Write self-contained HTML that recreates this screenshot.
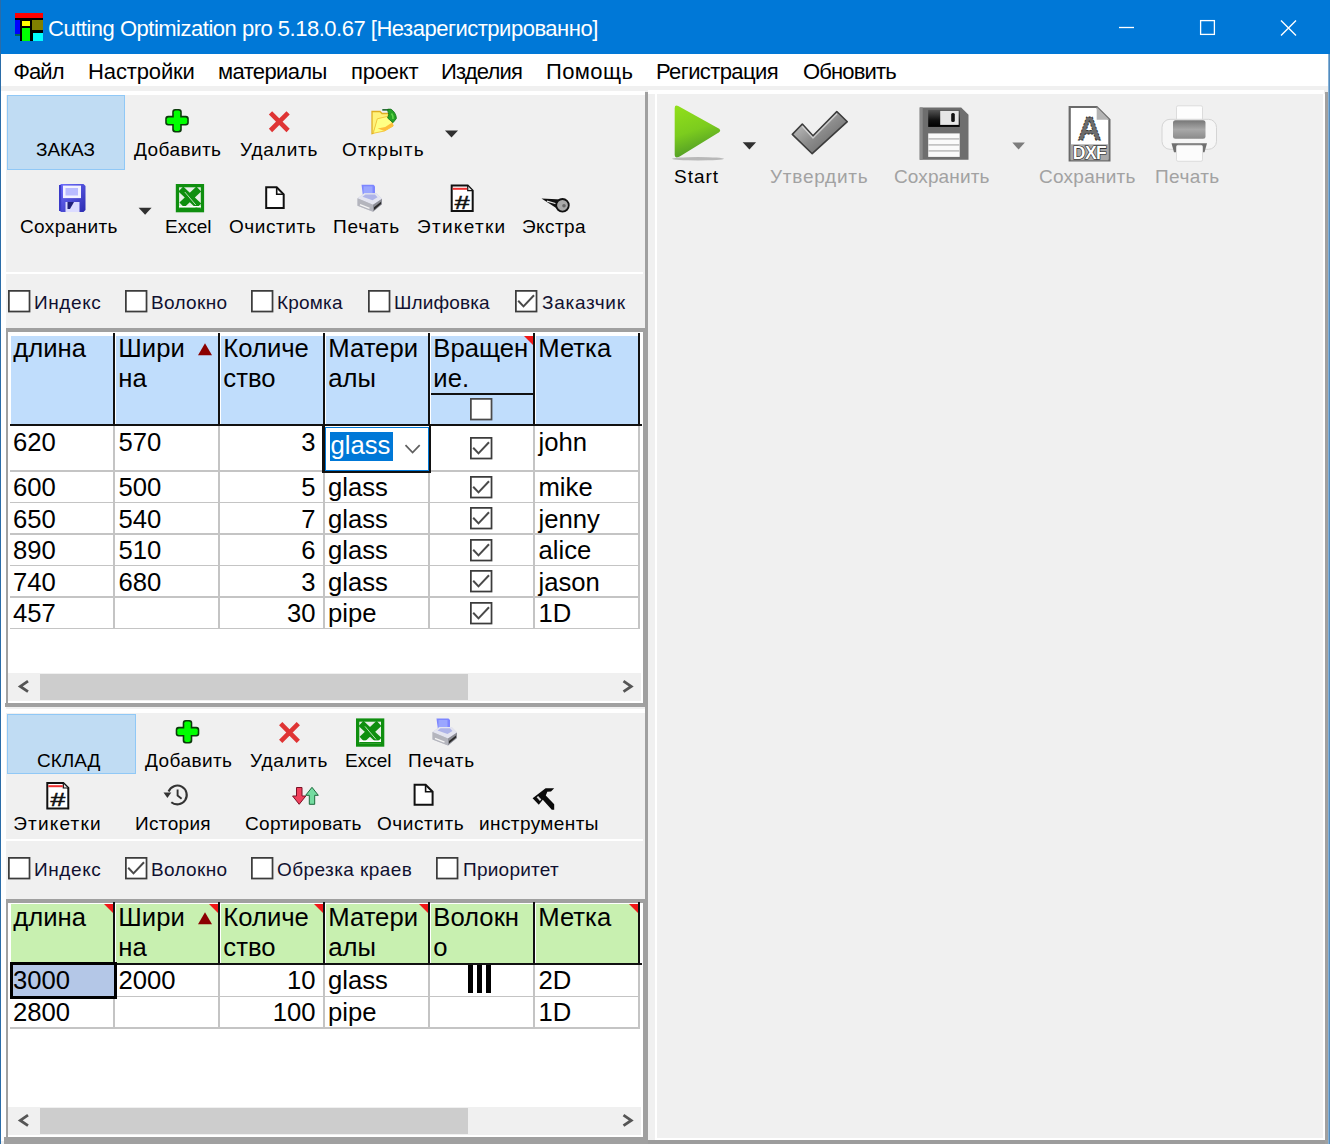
<!DOCTYPE html>
<html lang="ru"><head><meta charset="utf-8"><title>Cutting Optimization pro</title>
<style>
html,body{margin:0;padding:0}
body{width:1330px;height:1144px;position:relative;overflow:hidden;background:#f0f0f0;font-family:"Liberation Sans",sans-serif}
.a{position:absolute}
.t{position:absolute;white-space:pre;line-height:1;font-family:"Liberation Sans",sans-serif}
.g{position:absolute;white-space:pre;line-height:1;font-family:"Liberation Sans",sans-serif;font-size:25.67px;color:#000}
.cb{position:absolute;width:18.9px;height:18.9px;border:1.75px solid #3c3c3c;background:#fff}
svg{position:absolute;overflow:visible}
</style></head><body>

<div class="a" style="left:0px;top:0px;width:1330px;height:54.4px;background:#0078d7;"></div>
<div class="a" style="left:0px;top:54px;width:1330px;height:32px;background:#fff;"></div>
<div class="a" style="left:1px;top:90.5px;width:644px;height:4.5px;background:#fff;"></div>
<div class="a" style="left:1px;top:90.5px;width:5px;height:1050px;background:#fff;"></div>
<div class="a" style="left:648px;top:90px;width:676px;height:4px;background:#fff;"></div>
<div class="a" style="left:655px;top:90px;width:2px;height:1048px;background:#fff;"></div>
<div class="a" style="left:645px;top:92px;width:3.4px;height:1048px;background:#a0a0a0;"></div>
<div class="a" style="left:4.5px;top:703.3px;width:643px;height:3.4px;background:#a0a0a0;"></div>
<div class="a" style="left:1px;top:709px;width:644px;height:4px;background:#fff;"></div>
<div class="a" style="left:4px;top:1137px;width:644px;height:7px;background:#a0a0a0;"></div>
<div class="a" style="left:648px;top:1140px;width:680px;height:4px;background:#9c9c9c;"></div>
<div class="a" style="left:655px;top:1138.3px;width:670px;height:1.7px;background:#fff;"></div>
<div class="a" style="left:1323.3px;top:94px;width:2px;height:1044px;background:#fff;"></div>
<div class="a" style="left:1325.3px;top:92px;width:2.3px;height:1052px;background:#a0a0a0;"></div>
<div class="a" style="left:0px;top:0px;width:1.2px;height:1144px;background:#2a6ca8;"></div>
<div class="a" style="left:1327.6px;top:54px;width:2.4px;height:1090px;background:linear-gradient(90deg,#9cc4e4,#3c78b0);"></div>
<div class="a" style="left:6px;top:272px;width:637px;height:2px;background:#fff;"></div>
<div class="a" style="left:6px;top:839px;width:637px;height:2.4px;background:#fff;"></div>
<svg style="left:15px;top:13px" width="28" height="28" viewBox="0 0 28 28">
<rect x="0" y="0" width="28" height="28" fill="#000"/>
<rect x="0" y="0" width="28" height="5" fill="#f00"/>
<rect x="0" y="7" width="5" height="14" fill="#00f"/>
<rect x="0" y="22" width="5" height="6" fill="#0078d7"/>
<rect x="0" y="21" width="5" height="2" fill="#065"/>
<rect x="7" y="8" width="8" height="5" fill="#ff0"/>
<rect x="7" y="15" width="8" height="13" fill="#0f0"/>
<rect x="17" y="7" width="11" height="10" fill="#808000"/>
<rect x="18" y="20" width="10" height="8" fill="#0ff"/>
</svg>
<svg style="left:1110px;top:10px" width="200" height="36" viewBox="0 0 200 36">
<path d="M9 17.5H24" stroke="#fff" stroke-width="1.3" fill="none"/>
<rect x="90.6" y="10.6" width="13.8" height="13.8" stroke="#fff" stroke-width="1.3" fill="none"/>
<path d="M171 10.5L186 25.5M186 10.5L171 25.5" stroke="#fff" stroke-width="1.4" fill="none"/>
</svg>
<div class="a" style="left:6.5px;top:95.3px;width:116.8px;height:72.7px;background:#c0dcf3;border:1px solid #90c8f6"></div>
<div class="a" style="left:6.5px;top:713.5px;width:127.3px;height:58.5px;background:#c0dcf3;border:1px solid #90c8f6"></div>
<svg style="left:0;top:0" width="1330" height="1144" viewBox="0 0 1330 1144">
<defs>
<linearGradient id="gPlay" x1="0" y1="0" x2="0.3" y2="1"><stop offset="0" stop-color="#92e01a"/><stop offset="0.55" stop-color="#7ccc1e"/><stop offset="1" stop-color="#4f9a26"/></linearGradient>
<linearGradient id="gChk" x1="0" y1="0" x2="1" y2="1"><stop offset="0" stop-color="#d8d8d8"/><stop offset="0.5" stop-color="#8c8c8c"/><stop offset="1" stop-color="#5a5a5a"/></linearGradient>
<linearGradient id="gFl" x1="0" y1="0" x2="1" y2="1"><stop offset="0" stop-color="#7070ff"/><stop offset="1" stop-color="#2c2cb0"/></linearGradient>
<linearGradient id="gBlk" x1="0" y1="0" x2="0" y2="1"><stop offset="0" stop-color="#555"/><stop offset="0.6" stop-color="#111"/><stop offset="1" stop-color="#000"/></linearGradient>
<linearGradient id="gPr" x1="0" y1="0" x2="0" y2="1"><stop offset="0" stop-color="#777"/><stop offset="0.5" stop-color="#a8a8a8"/><stop offset="1" stop-color="#8a8a8a"/></linearGradient>
</defs>
<g transform="translate(177 120.7)"><rect x="-11.8" y="-4.9" width="23.6" height="9.8" rx="3" fill="#0b3b0b"/><rect x="-4.8" y="-11.8" width="9.6" height="23.6" rx="3" fill="#0b3b0b"/><rect x="-10.2" y="-3.3" width="20.4" height="6.6" rx="1.8" fill="#0f0"/><rect x="-3.2" y="-10.2" width="6.4" height="20.4" rx="1.8" fill="#0f0"/></g>
<g transform="translate(279.3 121.7)"><path d="M-8.8 -8.8L8.8 8.8M8.8 -8.8L-8.8 8.8" stroke="#df3434" stroke-width="4.6" fill="none"/></g>
<path d="M372 111.500h8l2 2h6.500v5l-10.500 1.500-4.500 13.300-1.500 0.300z" fill="#fff27a" stroke="#dfae22" stroke-width="1.300"/><path d="M377.300 118.800l12.700-3 3.200 10.200-8.700 5-11.300 2.300z" fill="#ffff84" stroke="#f2c840" stroke-width="1"/><path d="M384.500 131l8.700-5-1-3.500-7 4.500-7.500 1.500z" fill="#ffbe3c"/><path d="M382.300 109h8v1.700h-8z" fill="#2c6e3a"/><path d="M387.800 109.200L391 109.200Q396 112.500 396.400 118.500L393 122.700L387.600 118Q389.800 114.500 387.800 111Z" fill="#25a325" stroke="#0d6d12" stroke-width="0.800"/><path d="M391.500 113.500q2 2.500 1.500 5.500" stroke="#5fd64a" stroke-width="1.500" fill="none"/>
<path d="M445 130.4h13l-6.5 7z" fill="#303030"/>
<g transform="translate(59 184)"><path d="M2 0h22.500l2 2v24l-2 2h-22.500l-2-2v-24z" fill="url(#gFl)"/><rect x="4" y="1.600" width="18" height="12.500" fill="#f2f2ff"/><rect x="6.500" y="4" width="12.500" height="7.500" fill="#b9bcff"/><rect x="6.500" y="18" width="14" height="10" fill="#dcdcff"/><path d="M8.500 18h6.500l-4 7h-2.500z" fill="#20207a"/><rect x="0" y="1" width="2.200" height="26" fill="#3a3ac8"/></g>
<path d="M138.6 207.8h13l-6.5 7z" fill="#303030"/>
<rect x="175.8" y="184" width="28.3" height="28.3" fill="#0f8f0f"/><rect x="179.10000000000002" y="187.3" width="21.700000000000003" height="21.700000000000003" fill="#e8efe8"/><path d="M180.8 189L198.8 206M198.8 189L181.8 205" stroke="#0f8f0f" stroke-width="7" fill="none"/><path d="M184.8 192L195.8 205" stroke="#c8e8c8" stroke-width="0.9"/><rect x="179.10000000000002" y="206" width="21.700000000000003" height="1.6" fill="#fff"/><rect x="179.10000000000002" y="207.6" width="21.700000000000003" height="1.6" fill="#0f8f0f"/>
<path d="M266.2 187.3h10.5l7 7v13.8h-17.5z" fill="#fff" stroke="#111" stroke-width="2" stroke-linejoin="miter"/><path d="M276.7 187.3v7h7" fill="none" stroke="#111" stroke-width="1.6"/>
<g transform="translate(355.5 184.3)"><path d="M6 0.5h12l1.5 1.5v10h-12z" fill="#7d86ff"/><path d="M8 2h9v9h-9z" fill="#9aa6ff"/><path d="M2 14l7-5h12l5.5 5.5v5.5l-9 7.5-15.5-6z" fill="#c9cad6"/><path d="M2 14l7-5h12l5.5 5.5-9 6z" fill="#e4e5f0"/><path d="M7 12.5l3-2.2h9.5l2.5 2.6-5 3.1z" fill="#aeb4e8"/><path d="M2 14l15.500 6.500v7l-15.500-6z" fill="#b4b5bd"/><path d="M17.5 20.500l9-6v5.500l-9 7.500z" fill="#8d8e96"/><path d="M18.5 23l7-5.500v2.300l-7 5.800z" fill="#2a2a2a"/><path d="M4.500 20.300l9.500 3.800" stroke="#f4f4f4" stroke-width="1.400"/></g>
<path d="M451.7 185.6h16l5 5v20.5h-21z" fill="#fff" stroke="#111" stroke-width="2"/><path d="M467.7 186.1v4.5h4.5" fill="#e4e4e4" stroke="#111" stroke-width="1.2"/><rect x="452.7" y="187.79999999999998" width="14.5" height="2" fill="#f03030"/><text transform="translate(462.2 208.6) scale(1.4 1)" x="0" y="0" font-family="Liberation Sans, sans-serif" font-size="19" text-anchor="middle" fill="#111" stroke="#111" stroke-width="0.5">#</text>
<g transform="translate(541.500 198)"><path d="M0 0.400l20 1-3 10z" fill="#111"/><path d="M5.500 3.200l10 2.800" stroke="#e8e8e8" stroke-width="1.200"/><circle cx="21" cy="7.300" r="6.300" fill="#a9a9a9" stroke="#111" stroke-width="1.800"/><circle cx="22.500" cy="7.800" r="1.800" fill="#666"/></g>
<g transform="translate(187.5 731.7)"><rect x="-11.8" y="-4.9" width="23.6" height="9.8" rx="3" fill="#0b3b0b"/><rect x="-4.8" y="-11.8" width="9.6" height="23.6" rx="3" fill="#0b3b0b"/><rect x="-10.2" y="-3.3" width="20.4" height="6.6" rx="1.8" fill="#0f0"/><rect x="-3.2" y="-10.2" width="6.4" height="20.4" rx="1.8" fill="#0f0"/></g>
<g transform="translate(289.5 732.5)"><path d="M-8.8 -8.8L8.8 8.8M8.8 -8.8L-8.8 8.8" stroke="#df3434" stroke-width="4.6" fill="none"/></g>
<rect x="356" y="718.4" width="28.3" height="28.3" fill="#0f8f0f"/><rect x="359.3" y="721.6999999999999" width="21.700000000000003" height="21.700000000000003" fill="#e8efe8"/><path d="M361 723.4L379 740.4M379 723.4L362 739.4" stroke="#0f8f0f" stroke-width="7" fill="none"/><path d="M365 726.4L376 739.4" stroke="#c8e8c8" stroke-width="0.9"/><rect x="359.3" y="740.4" width="21.700000000000003" height="1.6" fill="#fff"/><rect x="359.3" y="742.0" width="21.700000000000003" height="1.6" fill="#0f8f0f"/>
<g transform="translate(430.5 718)"><path d="M6 0.5h12l1.5 1.5v10h-12z" fill="#7d86ff"/><path d="M8 2h9v9h-9z" fill="#9aa6ff"/><path d="M2 14l7-5h12l5.5 5.5v5.5l-9 7.5-15.5-6z" fill="#c9cad6"/><path d="M2 14l7-5h12l5.5 5.5-9 6z" fill="#e4e5f0"/><path d="M7 12.5l3-2.2h9.5l2.5 2.6-5 3.1z" fill="#aeb4e8"/><path d="M2 14l15.500 6.500v7l-15.500-6z" fill="#b4b5bd"/><path d="M17.5 20.500l9-6v5.500l-9 7.500z" fill="#8d8e96"/><path d="M18.5 23l7-5.500v2.300l-7 5.800z" fill="#2a2a2a"/><path d="M4.500 20.300l9.500 3.800" stroke="#f4f4f4" stroke-width="1.400"/></g>
<path d="M47.3 783h16l5 5v20.5h-21z" fill="#fff" stroke="#111" stroke-width="2"/><path d="M63.3 783.5v4.5h4.5" fill="#e4e4e4" stroke="#111" stroke-width="1.2"/><rect x="48.3" y="785.2" width="14.5" height="2" fill="#f03030"/><text transform="translate(57.8 806) scale(1.4 1)" x="0" y="0" font-family="Liberation Sans, sans-serif" font-size="19" text-anchor="middle" fill="#111" stroke="#111" stroke-width="0.5">#</text>
<g transform="translate(177.300 795)" fill="none" stroke="#333" stroke-width="2.100"><path d="M-8.700 -3.500A9.400 9.400 0 1 1 -6 7.200"/><path d="M0.300 -5.500v6l4 3.200" stroke-width="1.900"/><path d="M-13.800 -2.500h7.800l-3.900 5.500z" fill="#333" stroke="none"/></g>
<path d="M296.500 787.500h5.500v8.500h3.800l-6.600 8.300-6.600-8.300h3.900z" fill="#f0405c" stroke="#7a1024" stroke-width="1"/><path d="M309.300 804.300v-9h-3.600l6.300-8 6.300 8h-3.600v9z" fill="#74dca0" stroke="#1c6a3c" stroke-width="1"/>
<path d="M414.6 784.7h11l7 7v13h-18z" fill="#fff" stroke="#111" stroke-width="2" stroke-linejoin="miter"/><path d="M425.6 784.7v7h7" fill="none" stroke="#111" stroke-width="1.6"/>
<path d="M532.600 798.200L545.600 788.300L554.200 788.300L551 791.600L547.300 791.800L545.800 795.600L554.200 804.300L554.200 809.800L551.800 809.800L542.800 799.800L538.800 804.800Z" fill="#0a0a0a"/><path d="M536.600 797.200l1.500-1.200 3.300 3.600-1.500 1.300z" fill="#d8d8d8"/>
<path d="M674.700 108q0-3.500 3.500-2l40.500 22.500q3 2 0 4l-39 24q-5 2.500-5-1.500z" fill="url(#gPlay)"/><ellipse cx="698" cy="158.800" rx="26" ry="1.700" fill="#b8b8b8"/>
<path d="M742.7 142.2h13.4l-6.7 7.4z" fill="#303030"/>
<path d="M792.300 134.400L802.300 124L813 135.800L836.800 111.500L847.300 121.700L812.200 153.700Z" fill="url(#gChk)" stroke="#3c3c3c" stroke-width="1.600" stroke-linejoin="round"/><path d="M802.300 126.300l10.700 11.700 24-24.300" stroke="#e4e4e4" stroke-width="1.300" fill="none" opacity="0.700"/>
<g transform="translate(919.700 107.400)"><path d="M0 0h41.500l7.300 7.300v45.100h-48.800z" fill="#6e6e6e"/><path d="M0 0h3v52.400h-3z" fill="#8a8a8a"/><rect x="8.500" y="2.500" width="31.500" height="17" fill="url(#gBlk)"/><rect x="20.500" y="3.500" width="18.500" height="14" fill="#e6e6e6"/><rect x="31.500" y="5.500" width="3.600" height="9" rx="1.500" fill="#111"/><rect x="8.500" y="26" width="31.500" height="23.500" fill="#fafafa"/><path d="M8.500 31.500h31.500M8.500 37.500h31.500M8.500 43.500h31.500" stroke="#c4c4c4" stroke-width="1.600"/></g>
<path d="M1012.3 142.6h12.6l-6.3 7z" fill="#7c7c7c"/>
<g transform="translate(1068.500 105.800)"><path d="M1.200 1.200h27l12.700 12.700v40.800h-39.700z" fill="#fff" stroke="#6a6a6a" stroke-width="2.200"/><path d="M28.200 1.200v12.700h12.700z" fill="#b4b4b4"/><rect x="2.300" y="38.500" width="37.500" height="16" fill="#a8a8a8"/><text x="21" y="34" font-family="Liberation Sans, sans-serif" font-weight="bold" font-size="33" text-anchor="middle" fill="#6c6c6c" stroke="#222" stroke-width="0.800" stroke-dasharray="2 1.500">A</text><text x="21" y="52.800" font-family="Liberation Sans, sans-serif" font-weight="bold" font-size="17.500" text-anchor="middle" fill="#fff" stroke="#111" stroke-width="1.100" paint-order="stroke" letter-spacing="-0.500">DXF</text></g>
<g transform="translate(1161.500 105.800)"><rect x="15" y="0" width="26" height="17" rx="1.500" fill="#fdfdfd" stroke="#dcdcdc" stroke-width="1"/><rect x="0.500" y="13.500" width="54.500" height="30" rx="8" fill="#f6f6f6" stroke="#d4d4d4" stroke-width="1"/><rect x="11.500" y="14.500" width="32.500" height="18.500" rx="2.500" fill="url(#gPr)"/><path d="M10 37.500h35.500l-2.500 9h-30.500z" fill="#707070"/><rect x="15" y="39.500" width="26" height="16" rx="1.500" fill="#fcfcfc" stroke="#dcdcdc" stroke-width="1"/></g>
</svg>
<svg style="left:8.3px;top:289.8px" width="23" height="23" viewBox="0 0 23 23"><rect x="0.875" y="0.875" width="20.65" height="20.65" fill="#fff" stroke="#3c3c3c" stroke-width="1.75"/></svg>
<svg style="left:125.3px;top:289.8px" width="23" height="23" viewBox="0 0 23 23"><rect x="0.875" y="0.875" width="20.65" height="20.65" fill="#fff" stroke="#3c3c3c" stroke-width="1.75"/></svg>
<svg style="left:251.3px;top:289.8px" width="23" height="23" viewBox="0 0 23 23"><rect x="0.875" y="0.875" width="20.65" height="20.65" fill="#fff" stroke="#3c3c3c" stroke-width="1.75"/></svg>
<svg style="left:368.3px;top:289.8px" width="23" height="23" viewBox="0 0 23 23"><rect x="0.875" y="0.875" width="20.65" height="20.65" fill="#fff" stroke="#3c3c3c" stroke-width="1.75"/></svg>
<svg style="left:515.3px;top:289.8px" width="23" height="23" viewBox="0 0 23 23"><rect x="0.875" y="0.875" width="20.65" height="20.65" fill="#fff" stroke="#3c3c3c" stroke-width="1.75"/><path d="M3.2 10.8L8.5 16.4L19 5.2" stroke="#4a4a4a" stroke-width="2" fill="none"/></svg>
<svg style="left:8.3px;top:857.3px" width="23" height="23" viewBox="0 0 23 23"><rect x="0.875" y="0.875" width="20.65" height="20.65" fill="#fff" stroke="#3c3c3c" stroke-width="1.75"/></svg>
<svg style="left:125.3px;top:857.3px" width="23" height="23" viewBox="0 0 23 23"><rect x="0.875" y="0.875" width="20.65" height="20.65" fill="#fff" stroke="#3c3c3c" stroke-width="1.75"/><path d="M3.2 10.8L8.5 16.4L19 5.2" stroke="#4a4a4a" stroke-width="2" fill="none"/></svg>
<svg style="left:251.3px;top:857.3px" width="23" height="23" viewBox="0 0 23 23"><rect x="0.875" y="0.875" width="20.65" height="20.65" fill="#fff" stroke="#3c3c3c" stroke-width="1.75"/></svg>
<svg style="left:436.3px;top:857.3px" width="23" height="23" viewBox="0 0 23 23"><rect x="0.875" y="0.875" width="20.65" height="20.65" fill="#fff" stroke="#3c3c3c" stroke-width="1.75"/></svg>
<div class="a" style="left:6px;top:328px;width:639px;height:375px;background:#a0a0a0;"></div>
<div class="a" style="left:8.2px;top:331.5px;width:634.8px;height:371.5px;background:#fff;"></div>
<div class="a" style="left:11px;top:335.5px;width:102.5px;height:88.8px;background:#c0ddfc;"></div>
<div class="a" style="left:113px;top:333.0px;width:2.2px;height:93.0px;background:#111;"></div>
<div class="a" style="left:116px;top:335.5px;width:102.5px;height:88.8px;background:#c0ddfc;"></div>
<div class="a" style="left:218px;top:333.0px;width:2.2px;height:93.0px;background:#111;"></div>
<div class="a" style="left:221px;top:335.5px;width:102.5px;height:88.8px;background:#c0ddfc;"></div>
<div class="a" style="left:323px;top:333.0px;width:2.2px;height:93.0px;background:#111;"></div>
<div class="a" style="left:326px;top:335.5px;width:102.5px;height:88.8px;background:#c0ddfc;"></div>
<div class="a" style="left:428px;top:333.0px;width:2.2px;height:93.0px;background:#111;"></div>
<div class="a" style="left:431px;top:335.5px;width:102.5px;height:88.8px;background:#c0ddfc;"></div>
<div class="a" style="left:533px;top:333.0px;width:2.2px;height:93.0px;background:#111;"></div>
<div class="a" style="left:536px;top:335.5px;width:102.5px;height:88.8px;background:#c0ddfc;"></div>
<div class="a" style="left:638px;top:333.0px;width:2.2px;height:93.0px;background:#111;"></div>
<div class="a" style="left:10px;top:423.9px;width:632px;height:2.2px;background:#111;"></div>
<span class="g" style="left:13.3px;top:336.4px">длина</span>
<span class="g" style="left:118.3px;top:336.4px">Шири</span>
<span class="g" style="left:118.3px;top:366.4px">на</span>
<span class="g" style="left:223.3px;top:336.4px">Количе</span>
<span class="g" style="left:223.3px;top:366.4px">ство</span>
<span class="g" style="left:328.3px;top:336.4px">Матери</span>
<span class="g" style="left:328.3px;top:366.4px">алы</span>
<span class="g" style="left:433.3px;top:336.4px">Вращен</span>
<span class="g" style="left:433.3px;top:366.4px">ие.</span>
<span class="g" style="left:538.3px;top:336.4px">Метка</span>
<svg style="left:197px;top:342.5px" width="16" height="14" viewBox="0 0 16 14"><path d="M8 0.3L15 12.3H1Z" fill="#8b0000"/></svg>
<svg style="left:524px;top:335.5px" width="9" height="9" viewBox="0 0 9 9"><path d="M0 0H9V9Z" fill="#f01818"/></svg>
<div class="a" style="left:10px;top:470.0px;width:630px;height:1.6px;background:#c4c4c4;"></div>
<div class="a" style="left:10px;top:501.5px;width:630px;height:1.6px;background:#c4c4c4;"></div>
<div class="a" style="left:10px;top:533.0px;width:630px;height:1.6px;background:#c4c4c4;"></div>
<div class="a" style="left:10px;top:564.5px;width:630px;height:1.6px;background:#c4c4c4;"></div>
<div class="a" style="left:10px;top:596.0px;width:630px;height:1.6px;background:#c4c4c4;"></div>
<div class="a" style="left:10px;top:627.5px;width:630px;height:1.6px;background:#c4c4c4;"></div>
<div class="a" style="left:113px;top:425.5px;width:1.8px;height:203.5px;background:#c4c4c4;"></div>
<div class="a" style="left:218px;top:425.5px;width:1.8px;height:203.5px;background:#c4c4c4;"></div>
<div class="a" style="left:323px;top:425.5px;width:1.8px;height:203.5px;background:#c4c4c4;"></div>
<div class="a" style="left:428px;top:425.5px;width:1.8px;height:203.5px;background:#c4c4c4;"></div>
<div class="a" style="left:533px;top:425.5px;width:1.8px;height:203.5px;background:#c4c4c4;"></div>
<div class="a" style="left:638px;top:425.5px;width:1.8px;height:203.5px;background:#c4c4c4;"></div>
<div class="a" style="left:8px;top:673px;width:633px;height:28px;background:#f0f0f0;"></div>
<div class="a" style="left:40px;top:674px;width:428px;height:25.5px;background:#cdcdcd;"></div>
<svg style="left:8px;top:673px" width="633" height="28" viewBox="0 0 633 28"><path d="M20 8.2L12.3 13.4L20 18.6" stroke="#555" stroke-width="2.8" fill="none"/><path d="M615.5 8.2L623.2 13.4L615.5 18.6" stroke="#555" stroke-width="2.8" fill="none"/></svg>
<div class="a" style="left:431px;top:392.5px;width:102.5px;height:2.3px;background:#111;"></div>
<svg style="left:470.1px;top:398.2px" width="23" height="23" viewBox="0 0 23 23"><rect x="0.875" y="0.875" width="20.65" height="20.65" fill="#fff" stroke="#4a4a4a" stroke-width="1.75"/></svg>
<span class="g" style="left:13px;top:429.5px">620</span>
<span class="g" style="left:118.5px;top:429.5px">570</span>
<span class="g" style="left:221px;width:94.5px;text-align:right;top:429.5px">3</span>
<span class="g" style="left:538.5px;top:429.5px">john</span>
<svg style="left:470.1px;top:436.9px" width="23" height="23" viewBox="0 0 23 23"><rect x="0.875" y="0.875" width="20.65" height="20.65" fill="#fff" stroke="#3c3c3c" stroke-width="1.75"/><path d="M3.2 10.8L8.5 16.4L19 5.2" stroke="#4a4a4a" stroke-width="2" fill="none"/></svg>
<span class="g" style="left:13px;top:475.0px">600</span>
<span class="g" style="left:118.5px;top:475.0px">500</span>
<span class="g" style="left:221px;width:94.5px;text-align:right;top:475.0px">5</span>
<span class="g" style="left:328px;top:475.0px">glass</span>
<span class="g" style="left:538.5px;top:475.0px">mike</span>
<svg style="left:470.1px;top:475.5px" width="23" height="23" viewBox="0 0 23 23"><rect x="0.875" y="0.875" width="20.65" height="20.65" fill="#fff" stroke="#3c3c3c" stroke-width="1.75"/><path d="M3.2 10.8L8.5 16.4L19 5.2" stroke="#4a4a4a" stroke-width="2" fill="none"/></svg>
<span class="g" style="left:13px;top:506.5px">650</span>
<span class="g" style="left:118.5px;top:506.5px">540</span>
<span class="g" style="left:221px;width:94.5px;text-align:right;top:506.5px">7</span>
<span class="g" style="left:328px;top:506.5px">glass</span>
<span class="g" style="left:538.5px;top:506.5px">jenny</span>
<svg style="left:470.1px;top:507px" width="23" height="23" viewBox="0 0 23 23"><rect x="0.875" y="0.875" width="20.65" height="20.65" fill="#fff" stroke="#3c3c3c" stroke-width="1.75"/><path d="M3.2 10.8L8.5 16.4L19 5.2" stroke="#4a4a4a" stroke-width="2" fill="none"/></svg>
<span class="g" style="left:13px;top:538.0px">890</span>
<span class="g" style="left:118.5px;top:538.0px">510</span>
<span class="g" style="left:221px;width:94.5px;text-align:right;top:538.0px">6</span>
<span class="g" style="left:328px;top:538.0px">glass</span>
<span class="g" style="left:538.5px;top:538.0px">alice</span>
<svg style="left:470.1px;top:538.5px" width="23" height="23" viewBox="0 0 23 23"><rect x="0.875" y="0.875" width="20.65" height="20.65" fill="#fff" stroke="#3c3c3c" stroke-width="1.75"/><path d="M3.2 10.8L8.5 16.4L19 5.2" stroke="#4a4a4a" stroke-width="2" fill="none"/></svg>
<span class="g" style="left:13px;top:569.5px">740</span>
<span class="g" style="left:118.5px;top:569.5px">680</span>
<span class="g" style="left:221px;width:94.5px;text-align:right;top:569.5px">3</span>
<span class="g" style="left:328px;top:569.5px">glass</span>
<span class="g" style="left:538.5px;top:569.5px">jason</span>
<svg style="left:470.1px;top:570px" width="23" height="23" viewBox="0 0 23 23"><rect x="0.875" y="0.875" width="20.65" height="20.65" fill="#fff" stroke="#3c3c3c" stroke-width="1.75"/><path d="M3.2 10.8L8.5 16.4L19 5.2" stroke="#4a4a4a" stroke-width="2" fill="none"/></svg>
<span class="g" style="left:13px;top:601.0px">457</span>
<span class="g" style="left:221px;width:94.5px;text-align:right;top:601.0px">30</span>
<span class="g" style="left:328px;top:601.0px">pipe</span>
<span class="g" style="left:538.5px;top:601.0px">1D</span>
<svg style="left:470.1px;top:601.5px" width="23" height="23" viewBox="0 0 23 23"><rect x="0.875" y="0.875" width="20.65" height="20.65" fill="#fff" stroke="#3c3c3c" stroke-width="1.75"/><path d="M3.2 10.8L8.5 16.4L19 5.2" stroke="#4a4a4a" stroke-width="2" fill="none"/></svg>
<div class="a" style="left:322px;top:423.5px;width:108.5px;height:49.5px;background:#fff;border:2.5px solid #111;border-left-width:3px;box-sizing:border-box"></div>
<div class="a" style="left:325px;top:426.5px;width:103.5px;height:44px;background:#fff;border:1.6px solid #0078d7;box-sizing:border-box"></div>
<div class="a" style="left:329.5px;top:432px;width:63.5px;height:29px;background:#0078d7;"></div>
<span class="g" style="left:330.5px;top:432.8px;color:#fff">glass</span>
<svg style="left:404px;top:443px" width="18" height="12" viewBox="0 0 18 12"><path d="M1.5 2.2L8.6 9.6L15.7 2.2" stroke="#606060" stroke-width="1.7" fill="none"/></svg>
<div class="a" style="left:6px;top:899px;width:639px;height:238px;background:#a0a0a0;"></div>
<div class="a" style="left:8.2px;top:902.5px;width:634.8px;height:234.5px;background:#fff;"></div>
<div class="a" style="left:11px;top:904px;width:102.5px;height:59.3px;background:#c8f0b0;"></div>
<div class="a" style="left:113px;top:901.5px;width:2.2px;height:63.5px;background:#111;"></div>
<div class="a" style="left:116px;top:904px;width:102.5px;height:59.3px;background:#c8f0b0;"></div>
<div class="a" style="left:218px;top:901.5px;width:2.2px;height:63.5px;background:#111;"></div>
<div class="a" style="left:221px;top:904px;width:102.5px;height:59.3px;background:#c8f0b0;"></div>
<div class="a" style="left:323px;top:901.5px;width:2.2px;height:63.5px;background:#111;"></div>
<div class="a" style="left:326px;top:904px;width:102.5px;height:59.3px;background:#c8f0b0;"></div>
<div class="a" style="left:428px;top:901.5px;width:2.2px;height:63.5px;background:#111;"></div>
<div class="a" style="left:431px;top:904px;width:102.5px;height:59.3px;background:#c8f0b0;"></div>
<div class="a" style="left:533px;top:901.5px;width:2.2px;height:63.5px;background:#111;"></div>
<div class="a" style="left:536px;top:904px;width:102.5px;height:59.3px;background:#c8f0b0;"></div>
<div class="a" style="left:638px;top:901.5px;width:2.2px;height:63.5px;background:#111;"></div>
<div class="a" style="left:10px;top:962.9px;width:632px;height:2.2px;background:#111;"></div>
<span class="g" style="left:13.3px;top:904.9px">длина</span>
<span class="g" style="left:118.3px;top:904.9px">Шири</span>
<span class="g" style="left:118.3px;top:934.9px">на</span>
<span class="g" style="left:223.3px;top:904.9px">Количе</span>
<span class="g" style="left:223.3px;top:934.9px">ство</span>
<span class="g" style="left:328.3px;top:904.9px">Матери</span>
<span class="g" style="left:328.3px;top:934.9px">алы</span>
<span class="g" style="left:433.3px;top:904.9px">Волокн</span>
<span class="g" style="left:433.3px;top:934.9px">о</span>
<span class="g" style="left:538.3px;top:904.9px">Метка</span>
<svg style="left:197px;top:912px" width="16" height="14" viewBox="0 0 16 14"><path d="M8 0.3L15 12.3H1Z" fill="#8b0000"/></svg>
<svg style="left:104px;top:904px" width="9" height="9" viewBox="0 0 9 9"><path d="M0 0H9V9Z" fill="#f01818"/></svg>
<svg style="left:209px;top:904px" width="9" height="9" viewBox="0 0 9 9"><path d="M0 0H9V9Z" fill="#f01818"/></svg>
<svg style="left:314px;top:904px" width="9" height="9" viewBox="0 0 9 9"><path d="M0 0H9V9Z" fill="#f01818"/></svg>
<svg style="left:419px;top:904px" width="9" height="9" viewBox="0 0 9 9"><path d="M0 0H9V9Z" fill="#f01818"/></svg>
<svg style="left:629px;top:904px" width="9" height="9" viewBox="0 0 9 9"><path d="M0 0H9V9Z" fill="#f01818"/></svg>
<div class="a" style="left:10px;top:995.5px;width:630px;height:1.6px;background:#c4c4c4;"></div>
<div class="a" style="left:10px;top:1027.0px;width:630px;height:1.6px;background:#c4c4c4;"></div>
<div class="a" style="left:113px;top:964.5px;width:1.8px;height:64.0px;background:#c4c4c4;"></div>
<div class="a" style="left:218px;top:964.5px;width:1.8px;height:64.0px;background:#c4c4c4;"></div>
<div class="a" style="left:323px;top:964.5px;width:1.8px;height:64.0px;background:#c4c4c4;"></div>
<div class="a" style="left:428px;top:964.5px;width:1.8px;height:64.0px;background:#c4c4c4;"></div>
<div class="a" style="left:533px;top:964.5px;width:1.8px;height:64.0px;background:#c4c4c4;"></div>
<div class="a" style="left:638px;top:964.5px;width:1.8px;height:64.0px;background:#c4c4c4;"></div>
<div class="a" style="left:8px;top:1107px;width:633px;height:28px;background:#f0f0f0;"></div>
<div class="a" style="left:40px;top:1108px;width:428px;height:25.5px;background:#cdcdcd;"></div>
<svg style="left:8px;top:1107px" width="633" height="28" viewBox="0 0 633 28"><path d="M20 8.2L12.3 13.4L20 18.6" stroke="#555" stroke-width="2.8" fill="none"/><path d="M615.5 8.2L623.2 13.4L615.5 18.6" stroke="#555" stroke-width="2.8" fill="none"/></svg>
<div class="a" style="left:10px;top:962px;width:106.5px;height:36.5px;background:#b4c7e7;border:3.2px solid #000;box-sizing:border-box"></div>
<span class="g" style="left:13px;top:968.0px">3000</span>
<span class="g" style="left:118.5px;top:968.0px">2000</span>
<span class="g" style="left:221px;width:94.5px;text-align:right;top:968.0px">10</span>
<span class="g" style="left:328px;top:968.0px">glass</span>
<span class="g" style="left:538.5px;top:968.0px">2D</span>
<span class="g" style="left:13px;top:999.5px">2800</span>
<span class="g" style="left:221px;width:94.5px;text-align:right;top:999.5px">100</span>
<span class="g" style="left:328px;top:999.5px">pipe</span>
<span class="g" style="left:538.5px;top:999.5px">1D</span>
<div class="a" style="left:468.3px;top:965px;width:5px;height:27.5px;background:#000;"></div>
<div class="a" style="left:477.3px;top:965px;width:5px;height:27.5px;background:#000;"></div>
<div class="a" style="left:486.3px;top:965px;width:5px;height:27.5px;background:#000;"></div>
<span class="t" style="left:48.0px;top:17.6px;font-size:22px;color:#fff;letter-spacing:-0.49px">Cutting Optimization pro 5.18.0.67 [Незарегистрированно]</span>
<span class="t" style="left:13.2px;top:61.1px;font-size:22px;color:#000;letter-spacing:-0.93px">Файл</span>
<span class="t" style="left:88.0px;top:61.1px;font-size:22px;color:#000;letter-spacing:-0.12px">Настройки</span>
<span class="t" style="left:218.0px;top:61.1px;font-size:22px;color:#000;letter-spacing:-0.62px">материалы</span>
<span class="t" style="left:351.0px;top:61.1px;font-size:22px;color:#000;letter-spacing:-0.20px">проект</span>
<span class="t" style="left:441.0px;top:61.1px;font-size:22px;color:#000;letter-spacing:-0.83px">Изделия</span>
<span class="t" style="left:546.0px;top:61.1px;font-size:22px;color:#000;letter-spacing:0.40px">Помощь</span>
<span class="t" style="left:656.0px;top:61.1px;font-size:22px;color:#000;letter-spacing:-0.60px">Регистрация</span>
<span class="t" style="left:803.0px;top:61.1px;font-size:22px;color:#000;letter-spacing:-0.86px">Обновить</span>
<span class="t" style="left:36.0px;top:139.9px;font-size:19px;color:#000;letter-spacing:-0.05px">ЗАКАЗ</span>
<span class="t" style="left:134.0px;top:139.9px;font-size:19px;color:#000;letter-spacing:0.43px">Добавить</span>
<span class="t" style="left:240.0px;top:139.9px;font-size:19px;color:#000;letter-spacing:0.83px">Удалить</span>
<span class="t" style="left:342.0px;top:139.9px;font-size:19px;color:#000;letter-spacing:1.17px">Открыть</span>
<span class="t" style="left:20.0px;top:216.9px;font-size:19px;color:#000;letter-spacing:0.38px">Сохранить</span>
<span class="t" style="left:165.0px;top:216.9px;font-size:19px;color:#000;letter-spacing:0.00px">Excel</span>
<span class="t" style="left:229.0px;top:216.9px;font-size:19px;color:#000;letter-spacing:0.57px">Очистить</span>
<span class="t" style="left:333.0px;top:216.9px;font-size:19px;color:#000;letter-spacing:0.80px">Печать</span>
<span class="t" style="left:417.0px;top:216.9px;font-size:19px;color:#000;letter-spacing:1.29px">Этикетки</span>
<span class="t" style="left:522.0px;top:216.9px;font-size:19px;color:#000;letter-spacing:0.40px">Экстра</span>
<span class="t" style="left:34.0px;top:293.4px;font-size:19px;color:#101030;letter-spacing:0.60px">Индекс</span>
<span class="t" style="left:151.0px;top:293.4px;font-size:19px;color:#101030;letter-spacing:0.33px">Волокно</span>
<span class="t" style="left:277.0px;top:293.4px;font-size:19px;color:#101030;letter-spacing:0.20px">Кромка</span>
<span class="t" style="left:394.0px;top:293.4px;font-size:19px;color:#101030;letter-spacing:0.14px">Шлифовка</span>
<span class="t" style="left:542.0px;top:293.4px;font-size:19px;color:#101030;letter-spacing:0.71px">Заказчик</span>
<span class="t" style="left:37.0px;top:751.2px;font-size:19px;color:#000;letter-spacing:0.00px">СКЛАД</span>
<span class="t" style="left:145.0px;top:751.2px;font-size:19px;color:#000;letter-spacing:0.43px">Добавить</span>
<span class="t" style="left:250.0px;top:751.2px;font-size:19px;color:#000;letter-spacing:0.83px">Удалить</span>
<span class="t" style="left:345.0px;top:751.2px;font-size:19px;color:#000;letter-spacing:0.00px">Excel</span>
<span class="t" style="left:408.0px;top:751.2px;font-size:19px;color:#000;letter-spacing:0.80px">Печать</span>
<span class="t" style="left:13.2px;top:814.2px;font-size:19px;color:#000;letter-spacing:1.19px">Этикетки</span>
<span class="t" style="left:135.0px;top:814.2px;font-size:19px;color:#000;letter-spacing:0.33px">История</span>
<span class="t" style="left:245.0px;top:814.2px;font-size:19px;color:#000;letter-spacing:0.30px">Сортировать</span>
<span class="t" style="left:377.0px;top:814.2px;font-size:19px;color:#000;letter-spacing:0.57px">Очистить</span>
<span class="t" style="left:479.0px;top:814.2px;font-size:19px;color:#000;letter-spacing:0.40px">инструменты</span>
<span class="t" style="left:34.0px;top:860.4px;font-size:19px;color:#101030;letter-spacing:0.60px">Индекс</span>
<span class="t" style="left:151.0px;top:860.4px;font-size:19px;color:#101030;letter-spacing:0.33px">Волокно</span>
<span class="t" style="left:277.0px;top:860.4px;font-size:19px;color:#101030;letter-spacing:0.42px">Обрезка краев</span>
<span class="t" style="left:463.0px;top:860.4px;font-size:19px;color:#101030;letter-spacing:0.25px">Приоритет</span>
<span class="t" style="left:674.0px;top:166.9px;font-size:19px;color:#000;letter-spacing:1.00px">Start</span>
<span class="t" style="left:770.0px;top:166.9px;font-size:19px;color:#a2a2a2;letter-spacing:0.75px">Утвердить</span>
<span class="t" style="left:894.0px;top:166.9px;font-size:19px;color:#a2a2a2;letter-spacing:0.12px">Сохранить</span>
<span class="t" style="left:1039.0px;top:166.9px;font-size:19px;color:#a2a2a2;letter-spacing:0.25px">Сохранить</span>
<span class="t" style="left:1155.0px;top:166.9px;font-size:19px;color:#a2a2a2;letter-spacing:0.40px">Печать</span>
</body></html>
